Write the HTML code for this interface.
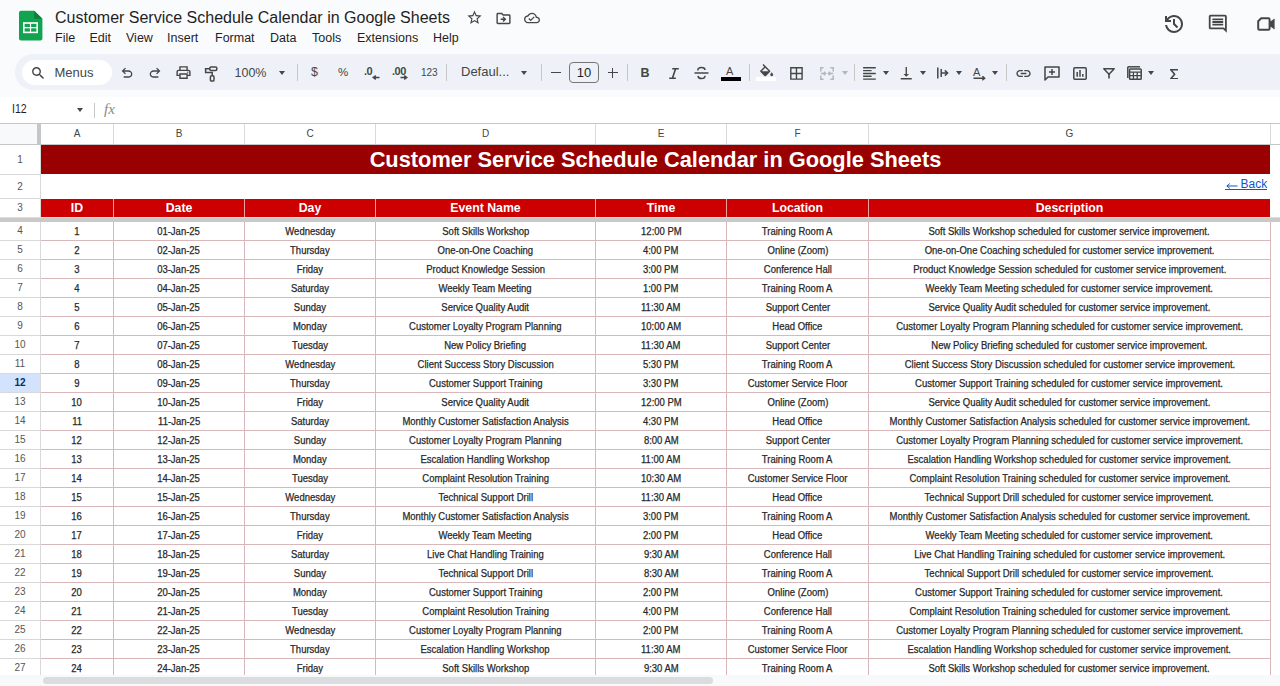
<!DOCTYPE html>
<html><head><meta charset="utf-8">
<style>
*{box-sizing:border-box;margin:0;padding:0}
html,body{width:1280px;height:686px;overflow:hidden;background:#f9fbfd;font-family:"Liberation Sans",sans-serif;color:#1f1f1f;position:relative}
.abs{position:absolute}
.title{position:absolute;left:55px;top:8px;font-size:16px;line-height:20px;white-space:nowrap;color:#1f1f1f}
.menu{position:absolute;top:30px;font-size:12.5px;line-height:16px;color:#1f1f1f;white-space:nowrap}
.tb{position:absolute;left:15px;top:54px;width:1300px;height:36px;background:#eef2f8;border-radius:18px}
.pill{position:absolute;left:22px;top:60px;width:90px;height:25px;background:#fff;border-radius:13px}
.ico{position:absolute;fill:#444746}
.sep{position:absolute;top:64px;width:1px;height:17px;background:#c7c7c7}
.tt{position:absolute;font-size:13px;line-height:16px;color:#444746;white-space:nowrap}
.dd{position:absolute;width:0;height:0;border-left:3px solid transparent;border-right:3px solid transparent;border-top:4px solid #444746}
.fbar{position:absolute;left:0;top:97px;width:1280px;height:26px;background:#fff}
.grid{position:absolute;left:0;top:123px;width:1280px;height:552px;background:#fff;overflow:hidden}
.colhdr{position:absolute;left:0;top:123px;width:1280px;height:22px;background:#fff;border-top:1px solid #c7c7c7;border-bottom:1px solid #c7c7c7}
.corner{position:absolute;left:0;top:0;width:37px;height:20px;background:#f8f9fa}
.freezev{position:absolute;left:37px;top:0;width:4px;height:20px;background:#c4c7c5}
.ch{position:absolute;top:0;height:20px;line-height:20px;text-align:center;font-size:10px;color:#444}
.chl{position:absolute;top:0;width:1px;height:20px;background:#d9d9d9}
.rh{position:absolute;left:0;width:40px;text-align:center;font-size:10px;color:#555}
.rh.sel{background:#d3e3fd;color:#062e6f;font-weight:bold}
.rhl{position:absolute;left:0;width:40px;height:1px;background:#d9d9d9}
.rvl{position:absolute;left:40px;top:145px;width:1px;height:530px;background:#d9d9d9}
.r1{position:absolute;left:41px;top:145px;width:1229px;height:29px;background:#990000;color:#fff;font-weight:bold;font-size:21.8px;line-height:29px;text-align:center;white-space:nowrap}
.back{position:absolute;left:1225px;top:176px;width:43px;height:17px;font-size:12px;line-height:17px;color:#1155cc;white-space:nowrap}
.hd{position:absolute;top:199px;height:18px;background:#cc0000;color:#fff;font-weight:bold;font-size:12.3px;line-height:18px;text-align:center;white-space:nowrap}
.hdl{position:absolute;top:199px;width:1px;height:18px;background:#f0a0a0}
.freezeh{position:absolute;left:0;top:217px;width:1280px;height:5px;background:#c9c9c9;border-top:1px solid #e6dada}
.c span{display:inline-block;transform:scaleX(0.95);-webkit-text-stroke:0.25px #333}
.c{position:absolute;height:18px;line-height:20px;font-size:10px;text-align:center;white-space:nowrap;color:#222}
.gh{position:absolute;left:41px;width:1229px;height:1px;background:#d8b8bb}
.gv{position:absolute;top:222px;width:1px;height:453px;background:#d8b8bb}
.sc{position:absolute;left:0;top:675px;width:1280px;height:11px;background:#f8f9fa}
.thumb{position:absolute;left:43px;top:677px;width:670px;height:7px;background:#dadce0;border-radius:4px}
</style></head><body>
<!-- logo -->
<svg class="abs" style="left:19px;top:10px" width="24" height="31" viewBox="0 0 24 31">
<path d="M2 0.8h13.2l8.2 8v19.6c0 1.1-0.9 2-2 2H2c-1.1 0-2-0.9-2-2V2.8c0-1.1 0.9-2 2-2z" fill="#11a350"/>
<path d="M15.2 0.8v6.4c0 0.9 0.7 1.6 1.6 1.6h6.6z" fill="#0c7f3d"/>
<rect x="4" y="12.2" width="15" height="11" fill="#fff"/>
<rect x="5.6" y="13.8" width="5.3" height="3.3" fill="#11a350"/>
<rect x="12.1" y="13.8" width="5.3" height="3.3" fill="#11a350"/>
<rect x="5.6" y="18.3" width="5.3" height="3.3" fill="#11a350"/>
<rect x="12.1" y="18.3" width="5.3" height="3.3" fill="#11a350"/>
</svg>
<div class="title">Customer Service Schedule Calendar in Google Sheets</div>
<!-- star folder cloud -->
<svg class="ico" style="left:466px;top:9px" width="17" height="17" viewBox="0 0 24 24"><path d="M22 9.24l-7.19-.62L12 2 9.19 8.63 2 9.24l5.46 4.73L5.82 21 12 17.27 18.18 21l-1.63-7.03L22 9.24zM12 15.4l-3.76 2.27 1-4.28-3.32-2.88 4.38-.38L12 6.1l1.71 4.04 4.38.38-3.32 2.88 1 4.28L12 15.4z"/></svg>
<svg class="ico" style="left:494.6px;top:9.8px" width="17" height="17" viewBox="0 0 24 24"><path d="M20 6h-8l-2-2H4c-1.1 0-1.99.9-1.99 2L2 18c0 1.1.9 2 2 2h16c1.1 0 2-.9 2-2V8c0-1.1-.9-2-2-2zm0 12H4V6h5.17l2 2H20v10zm-7.84-6H8v2h4.16l-1.59 1.59L11.99 17 16 13.01 11.99 9l-1.41 1.41L12.16 12z"/></svg>
<svg class="ico" style="left:523.8px;top:10px" width="16" height="16" viewBox="0 0 24 24"><path d="M19.35 10.04C18.67 6.59 15.64 4 12 4 9.11 4 6.6 5.640 5.35 8.04 2.34 8.36 0 10.91 0 14c0 3.31 2.69 6 6 6h13c2.760 0 5-2.24 5-5 0-2.64-2.05-4.78-4.65-4.96zM19 18H6c-2.21 0-4-1.79-4-4 0-2.05 1.53-3.76 3.56-3.97l1.07-.11.5-.95C8.080 7.14 9.94 6 12 6c2.62 0 4.88 1.86 5.39 4.43l.3 1.5 1.53.11c1.56.1 2.78 1.41 2.78 2.96 0 1.65-1.35 3-3 3zm-9-3.82l-2.090-2.09L6.5 13.5 10 17l6.01-6.01-1.41-1.41z"/></svg>
<!-- menu -->
<div class="menu" style="left:55px">File</div>
<div class="menu" style="left:89.5px">Edit</div>
<div class="menu" style="left:126px">View</div>
<div class="menu" style="left:167px">Insert</div>
<div class="menu" style="left:215px">Format</div>
<div class="menu" style="left:270px">Data</div>
<div class="menu" style="left:312px">Tools</div>
<div class="menu" style="left:357px">Extensions</div>
<div class="menu" style="left:433px">Help</div>
<!-- right icons -->
<svg class="ico" style="left:1162px;top:11.6px" width="24" height="24" viewBox="0 -960 960 960"><path d="M480-120q-138 0-240.5-91.5T122-440h82q14 104 92.5 172T480-200q117 0 198.5-81.5T760-480q0-117-81.5-198.5T480-760q-69 0-129 32t-101 88h110v80H120v-240h80v94q51-64 124.5-99T480-840q75 0 140.5 28.5t114 77q48.5 48.5 77 114T840-480q0 75-28.5 140.5t-77 114q-48.5 48.5-114 77T480-120Zm112-192L440-464v-216h80v184l128 128-56 56Z"/></svg>
<svg class="ico" style="left:1207.2px;top:13.2px" width="21.6" height="21.6" viewBox="0 0 24 24"><path d="M21.99 4c0-1.1-.89-2-1.990-2H4c-1.1 0-2 .9-2 2v12c0 1.1.9 2 2 2h14l4 4-.01-18zM20 4v13.17L18.83 16H4V4h16zM6 12h12v2H6zm0-3h12v2H6zm0-3h12v2H6z"/></svg>
<svg class="abs" style="left:1257px;top:17px" width="18" height="14" viewBox="0 0 18 14"><path d="M4.2 1.2H11.4Q12.6 1.2 12.6 2.4V11.6Q12.6 12.8 11.4 12.8H2.4Q1.2 12.8 1.2 11.6V4.2Z" fill="none" stroke="#444746" stroke-width="2" stroke-linejoin="round"/><path d="M12.6 5L17.6 1.6V12.4L12.6 9Z" fill="#444746"/></svg>
<!-- toolbar -->
<div class="tb"></div>
<div class="pill"></div>
<svg class="ico" style="left:29.942857142857143px;top:65.24285714285713px" width="16.457142857142856" height="16.457142857142856" viewBox="0 0 24 24" ><path d="M15.5 14h-.79l-.28-.27C15.41 12.59 16 11.11 16 9.5 16 5.91 13.09 3 9.5 3S3 5.91 3 9.5 5.91 16 9.5 16c1.61 0 3.090-.59 4.23-1.57l.27.28v.79l5 4.99L20.49 19l-4.99-5zm-6 0C7.01 14 5 11.99 5 9.5S7.01 5 9.5 5 14 7.01 14 9.5 11.99 14 9.5 14z"/></svg>
<div class="tt" style="left:54.5px;top:65px;font-size:13px">Menus</div>
<svg class="ico" style="left:118.62px;top:65.36px" width="16.049999999999997" height="16.049999999999997" viewBox="0 -960 960 960" ><path d="M280-200v-80h284q63 0 109.5-40T720-420q0-60-46.5-100T564-560H312l104 104-56 56-200-200 200-200 56 56-104 104h252q97 0 166.5 63T800-420q0 94-69.5 157T564-200H280Z"/></svg>
<svg class="ico" style="left:147.12px;top:65.36px" width="16.049999999999997" height="16.049999999999997" viewBox="0 -960 960 960" ><path transform="translate(960,0) scale(-1,1)" d="M280-200v-80h284q63 0 109.5-40T720-420q0-60-46.5-100T564-560H312l104 104-56 56-200-200 200-200 56 56-104 104h252q97 0 166.5 63T800-420q0 94-69.5 157T564-200H280Z"/></svg>
<svg class="ico" style="left:174.58px;top:64.47px" width="17.04" height="17.04" viewBox="0 -960 960 960" ><path d="M640-640v-120H320v120h-80v-200h480v200h-80Zm-480 80h640-640Zm560 100q17 0 28.5-11.5T760-500q0-17-11.5-28.5T720-540q-17 0-28.5 11.5T680-500q0 17 11.5 28.5T720-460Zm-80 260v-160H320v160h320Zm80 80H240v-160H80v-240q0-51 35-85.5t85-34.5h560q51 0 85.5 34.5T880-520v240H720v160Zm80-240v-160q0-17-11.5-28.5T760-560H200q-17 0-28.5 11.5T160-520v160h80v-80h480v80h80Z"/></svg>
<svg class="ico" style="left:204px;top:65px" width="14" height="17" viewBox="0 0 14 17" ><rect x="5.8" y="1.9" width="7" height="3.6" rx="1.2" fill="none" stroke="#444746" stroke-width="1.5"/><path d="M5.8 3.7H1.6V7.6H8.2V10.6" fill="none" stroke="#444746" stroke-width="1.5"/><rect x="6.4" y="10.8" width="3.6" height="5.3" rx="1.2" fill="none" stroke="#444746" stroke-width="1.5"/></svg>
<div class="tt" style="left:234.5px;top:65px;font-size:12.5px">100%</div>
<div class="dd" style="left:279px;top:70.8px;border-left-width:3.5px;border-right-width:3.5px;border-top-width:4px"></div>
<div class="sep" style="left:297px"></div>
<div class="tt" style="left:311px;top:64px;font-size:12.5px;">$</div>
<div class="tt" style="left:338px;top:64px;font-size:11.5px;">%</div>
<div class="tt" style="left:364px;top:63px;font-size:11px;font-weight:bold;letter-spacing:-0.5px">.0</div>
<svg class="ico" style="left:371.5px;top:74.8px" width="8" height="5" viewBox="0 0 8 5" ><path d="M7.5 2.5H2M3.8 0.6L1.2 2.5L3.8 4.4" fill="none" stroke="#444746" stroke-width="1.4"/></svg>
<div class="tt" style="left:392px;top:63px;font-size:11px;font-weight:bold;letter-spacing:-0.5px">.00</div>
<svg class="ico" style="left:399.5px;top:74.8px" width="8" height="5" viewBox="0 0 8 5" ><path d="M0.5 2.5H6M4.2 0.6L6.8 2.5L4.2 4.4" fill="none" stroke="#444746" stroke-width="1.4"/></svg>
<div class="tt" style="left:421px;top:65px;font-size:10px">123</div>
<div class="sep" style="left:446px"></div>
<div class="tt" style="left:461px;top:64px;font-size:13px">Defaul...</div>
<div class="dd" style="left:521px;top:70.8px;border-left-width:3.5px;border-right-width:3.5px;border-top-width:4px"></div>
<div class="sep" style="left:541px"></div>
<div class="abs" style="left:551px;top:72.2px;width:9.5px;height:1.3px;background:#444746"></div>
<div class="abs" style="left:569px;top:62px;width:30px;height:21px;border:1px solid #747775;border-radius:4px"></div>
<div class="tt" style="left:569px;top:64.5px;width:30px;text-align:center;font-size:13px;color:#1f1f1f">10</div>
<div class="abs" style="left:608px;top:72.2px;width:9.5px;height:1.3px;background:#444746"></div>
<div class="abs" style="left:612.1px;top:68px;width:1.3px;height:9.5px;background:#444746"></div>
<div class="sep" style="left:627px"></div>
<div class="tt" style="left:640.5px;top:64.5px;font-size:12.5px;font-weight:bold">B</div>
<svg class="ico" style="left:668.5px;top:67.5px" width="10" height="11" viewBox="0 0 10 11" ><path d="M3.2 0.8H9.8M0.2 10.2H6.8M6.6 0.8L3.4 10.2" fill="none" stroke="#444746" stroke-width="1.6"/></svg>
<svg class="ico" style="left:694px;top:66px" width="15" height="14" viewBox="0 0 15 14" ><path d="M0.5 7H14.5" stroke="#444746" stroke-width="1.5"/><path d="M3.8 4.5C3.8 2.6 5.3 1.5 7.5 1.5C9.6 1.5 11 2.6 11 4" fill="none" stroke="#444746" stroke-width="1.5"/><path d="M4 10C4.3 11.7 5.7 12.6 7.5 12.6C9.5 12.6 11 11.6 11 9.8" fill="none" stroke="#444746" stroke-width="1.5"/></svg>
<div class="tt" style="left:726px;top:63px;font-size:11px;">A</div>
<div class="abs" style="left:721px;top:77.3px;width:20px;height:3.3px;background:#000"></div>
<div class="sep" style="left:749px"></div>
<svg class="ico" style="left:757.83px;top:63.6px" width="17.333333333333332" height="17.333333333333332" viewBox="0 0 24 24" ><path d="M16.56 8.94L7.62 0 6.21 1.41l2.38 2.38-5.15 5.15c-.59.59-.59 1.54 0 2.12l5.5 5.5c.29.29.68.44 1.06.44s.77-.15 1.06-.44l5.5-5.5c.59-.58.59-1.530 0-2.12zM5.21 10L10 5.21 14.79 10H5.21zM19 11.5s-2 2.17-2 3.5c0 1.1.9 2 2 2s2-.9 2-2c0-1.33-2-3.5-2-3.5z"/></svg>
<div class="abs" style="left:756px;top:77.3px;width:20px;height:3.3px;background:#fff"></div>
<svg class="ico" style="left:788.48px;top:64.88px" width="16.93333333333333" height="16.93333333333333" viewBox="0 0 24 24" ><path d="M3 3v18h18V3H3zm8 16H5v-6h6v6zm0-8H5V5h6v6zm8 8h-6v-6h6v6zm0-8h-6V5h6v6z"/></svg>
<svg class="ico" style="left:819.5px;top:67px" width="14" height="13" viewBox="0 0 14 13" ><path d="M3.6 0.8H0.8V4.4M0.8 8.6V12.2H3.6M10.4 0.8H13.2V4.4M13.2 8.6V12.2H10.4" fill="none" stroke="#b4b6b8" stroke-width="1.5"/><path d="M0.8 6.5H5.6M3.9 4.7L5.7 6.5L3.9 8.3M13.2 6.5H8.4M10.1 4.7L8.3 6.5L10.1 8.3" fill="none" stroke="#b4b6b8" stroke-width="1.4"/></svg>
<div class="dd" style="left:842px;top:70.8px;border-left-width:3px;border-right-width:3px;border-top-width:4px;border-top-color:#b4b6b8"></div>
<div class="sep" style="left:854px"></div>
<svg class="ico" style="left:861.18px;top:65.18px" width="16.93333333333333" height="16.93333333333333" viewBox="0 0 24 24" ><path d="M15 15H3v2h12v-2zm0-8H3v2h12V7zM3 13h18v-2H3v2zm0 8h18v-2H3v2zM3 3v2h18V3H3z"/></svg>
<div class="dd" style="left:882.5px;top:70.8px;border-left-width:3px;border-right-width:3px;border-top-width:4px"></div>
<svg class="ico" style="left:898.25px;top:64.94px" width="16.5" height="16.5" viewBox="0 0 24 24" ><path d="M16 13h-3V3h-2v10H8l4 4 4-4zM4 19v2h16v-2H4z"/></svg>
<div class="dd" style="left:919.5px;top:70.8px;border-left-width:3px;border-right-width:3px;border-top-width:4px"></div>
<svg class="ico" style="left:936.5px;top:67px" width="12" height="12" viewBox="0 0 12 12" ><path d="M0.8 0.5V11.5M4.2 2V10M4.2 6H10.5M7.8 3.4L10.6 6L7.8 8.6" fill="none" stroke="#444746" stroke-width="1.5"/></svg>
<div class="dd" style="left:955.5px;top:70.8px;border-left-width:3px;border-right-width:3px;border-top-width:4px"></div>
<div class="tt" style="left:973px;top:63.5px;font-size:11px;">A</div>
<svg class="ico" style="left:972.5px;top:76px" width="13" height="5" viewBox="0 0 13 5" ><path d="M0.5 2.2H11.5M9.3 0.2L11.7 2.2L9.3 4.2" fill="none" stroke="#444746" stroke-width="1.4"/></svg>
<div class="dd" style="left:991.5px;top:70.8px;border-left-width:3px;border-right-width:3px;border-top-width:4px"></div>
<div class="sep" style="left:1006px"></div>
<svg class="ico" style="left:1014.83px;top:64.51px" width="17.1" height="17.1" viewBox="0 0 24 24" ><path d="M3.9 12c0-1.71 1.39-3.1 3.1-3.1h4V7H7c-2.76 0-5 2.24-5 5s2.24 5 5 5h4v-1.9H7c-1.71 0-3.1-1.39-3.1-3.1zM8 13h8v-2H8v2zm9-6h-4v1.9h4c1.71 0 3.1 1.39 3.1 3.1s-1.39 3.1-3.1 3.1h-4V17h4c2.76 0 5-2.24 5-5s-2.24-5-5-5z"/></svg>
<svg class="ico" style="left:1043.5px;top:66px" width="16" height="15" viewBox="0 0 16 15" ><path d="M1 1H15V11H4L1 14Z" fill="none" stroke="#444746" stroke-width="1.5" stroke-linejoin="round"/><path d="M8 3V9M5 6H11" stroke="#444746" stroke-width="1.5"/></svg>
<svg class="ico" style="left:1073px;top:67px" width="14" height="13" viewBox="0 0 14 13" ><rect x="0.8" y="0.8" width="12.4" height="11.4" rx="1" fill="none" stroke="#444746" stroke-width="1.5"/><path d="M4.2 5V9.8M7 3V9.8M9.8 7V9.8" stroke="#444746" stroke-width="1.5"/></svg>
<svg class="ico" style="left:1102.5px;top:68px" width="12" height="11" viewBox="0 0 12 11" ><path d="M0.8 0.8H11.2L6 6.2Z" fill="none" stroke="#444746" stroke-width="1.5" stroke-linejoin="round"/><path d="M6 6V10.5" stroke="#444746" stroke-width="1.6"/></svg>
<svg class="ico" style="left:1127px;top:66px" width="15" height="14" viewBox="0 0 15 14" ><path d="M0.8 0.8H13" stroke="#444746" stroke-width="1.5"/><rect x="2.6" y="3" width="11.6" height="10.2" rx="0.8" fill="none" stroke="#444746" stroke-width="1.5"/><path d="M0.8 0.8V12" stroke="#444746" stroke-width="1.5"/><path d="M2.6 6.2H14.2M2.6 9.6H14.2M6.4 6.2V13M10.2 6.2V13" stroke="#444746" stroke-width="1.3"/></svg>
<div class="dd" style="left:1148px;top:70.8px;border-left-width:3px;border-right-width:3px;border-top-width:4px"></div>
<svg class="ico" style="left:1169.5px;top:68.5px" width="8.5" height="10.5" viewBox="0 0 8.5 10.5" ><path d="M8 0.8H0.8L4.6 5.25L0.8 9.7H8" fill="none" stroke="#444746" stroke-width="1.6"/></svg>
<!-- formula bar -->
<div class="fbar"></div>
<div class="abs" style="left:12px;top:102px;font-size:12px;line-height:14px;color:#1f1f1f;transform:scaleX(0.88);transform-origin:0 0">I12</div>
<div class="dd" style="left:77px;top:108px;border-left-width:3.5px;border-right-width:3.5px;border-top-width:4px"></div>
<div class="abs" style="left:94px;top:103px;width:1px;height:15px;background:#c7c7c7"></div>
<div class="abs" style="left:104px;top:101px;font-family:'Liberation Serif',serif;font-style:italic;font-size:15px;line-height:17px;color:#888">fx</div>
<!-- grid -->
<div class="grid"></div>
<div class="rvl"></div>
<div class="colhdr">
<div class="corner"></div><div class="freezev"></div>
<div class="ch" style="left:41px;width:72px">A</div>
<div class="chl" style="left:113px"></div>
<div class="ch" style="left:114px;width:130px">B</div>
<div class="chl" style="left:244px"></div>
<div class="ch" style="left:245px;width:130px">C</div>
<div class="chl" style="left:375px"></div>
<div class="ch" style="left:376px;width:219px">D</div>
<div class="chl" style="left:595px"></div>
<div class="ch" style="left:596px;width:130px">E</div>
<div class="chl" style="left:726px"></div>
<div class="ch" style="left:727px;width:141px">F</div>
<div class="chl" style="left:868px"></div>
<div class="ch" style="left:869px;width:401px">G</div>
<div class="chl" style="left:1270px"></div>
</div>
<div class="rh" style="top:145px;height:29px;line-height:29px">1</div>
<div class="rhl" style="top:174px"></div>
<div class="rh" style="top:175px;height:23px;line-height:23px">2</div>
<div class="rhl" style="top:198px"></div>
<div class="rh" style="top:199px;height:18px;line-height:18px">3</div>
<div class="rh" style="top:222px;height:18px;line-height:18px">4</div>
<div class="rhl" style="top:240px"></div>
<div class="rh" style="top:241px;height:18px;line-height:18px">5</div>
<div class="rhl" style="top:259px"></div>
<div class="rh" style="top:260px;height:18px;line-height:18px">6</div>
<div class="rhl" style="top:278px"></div>
<div class="rh" style="top:279px;height:18px;line-height:18px">7</div>
<div class="rhl" style="top:297px"></div>
<div class="rh" style="top:298px;height:18px;line-height:18px">8</div>
<div class="rhl" style="top:316px"></div>
<div class="rh" style="top:317px;height:18px;line-height:18px">9</div>
<div class="rhl" style="top:335px"></div>
<div class="rh" style="top:336px;height:18px;line-height:18px">10</div>
<div class="rhl" style="top:354px"></div>
<div class="rh" style="top:355px;height:18px;line-height:18px">11</div>
<div class="rhl" style="top:373px"></div>
<div class="rh sel" style="top:374px;height:18px;line-height:18px">12</div>
<div class="rhl" style="top:392px"></div>
<div class="rh" style="top:393px;height:18px;line-height:18px">13</div>
<div class="rhl" style="top:411px"></div>
<div class="rh" style="top:412px;height:18px;line-height:18px">14</div>
<div class="rhl" style="top:430px"></div>
<div class="rh" style="top:431px;height:18px;line-height:18px">15</div>
<div class="rhl" style="top:449px"></div>
<div class="rh" style="top:450px;height:18px;line-height:18px">16</div>
<div class="rhl" style="top:468px"></div>
<div class="rh" style="top:469px;height:18px;line-height:18px">17</div>
<div class="rhl" style="top:487px"></div>
<div class="rh" style="top:488px;height:18px;line-height:18px">18</div>
<div class="rhl" style="top:506px"></div>
<div class="rh" style="top:507px;height:18px;line-height:18px">19</div>
<div class="rhl" style="top:525px"></div>
<div class="rh" style="top:526px;height:18px;line-height:18px">20</div>
<div class="rhl" style="top:544px"></div>
<div class="rh" style="top:545px;height:18px;line-height:18px">21</div>
<div class="rhl" style="top:563px"></div>
<div class="rh" style="top:564px;height:18px;line-height:18px">22</div>
<div class="rhl" style="top:582px"></div>
<div class="rh" style="top:583px;height:18px;line-height:18px">23</div>
<div class="rhl" style="top:601px"></div>
<div class="rh" style="top:602px;height:18px;line-height:18px">24</div>
<div class="rhl" style="top:620px"></div>
<div class="rh" style="top:621px;height:18px;line-height:18px">25</div>
<div class="rhl" style="top:639px"></div>
<div class="rh" style="top:640px;height:18px;line-height:18px">26</div>
<div class="rhl" style="top:658px"></div>
<div class="rh" style="top:659px;height:18px;line-height:18px">27</div>
<div class="rhl" style="top:677px"></div>
<div class="r1">Customer Service Schedule Calendar in Google Sheets</div>
<div class="back"><svg width="12" height="6" viewBox="0 0 12 6" style="position:absolute;left:0.5px;top:6.5px"><path d="M11.5 3H1.2M3.8 0.6L0.8 3L3.8 5.4" fill="none" stroke="#1155cc" stroke-width="1"/></svg><span style="margin-left:15.5px">Back</span><div style="position:absolute;left:0;top:12.8px;width:42px;height:1px;background:#1155cc"></div></div>
<div class="hd" style="left:41px;width:72px"><span>ID</span></div>
<div class="hdl" style="left:113px"></div>
<div class="hd" style="left:114px;width:130px"><span>Date</span></div>
<div class="hdl" style="left:244px"></div>
<div class="hd" style="left:245px;width:130px"><span>Day</span></div>
<div class="hdl" style="left:375px"></div>
<div class="hd" style="left:376px;width:219px"><span>Event Name</span></div>
<div class="hdl" style="left:595px"></div>
<div class="hd" style="left:596px;width:130px"><span>Time</span></div>
<div class="hdl" style="left:726px"></div>
<div class="hd" style="left:727px;width:141px"><span>Location</span></div>
<div class="hdl" style="left:868px"></div>
<div class="hd" style="left:869px;width:401px"><span>Description</span></div>
<div class="freezeh"></div>
<div class="c" style="left:41px;top:222px;width:72px"><span>1</span></div>
<div class="c" style="left:114px;top:222px;width:130px"><span>01-Jan-25</span></div>
<div class="c" style="left:245px;top:222px;width:130px"><span>Wednesday</span></div>
<div class="c" style="left:376px;top:222px;width:219px"><span>Soft Skills Workshop</span></div>
<div class="c" style="left:596px;top:222px;width:130px"><span>12:00 PM</span></div>
<div class="c" style="left:727px;top:222px;width:141px"><span>Training Room A</span></div>
<div class="c" style="left:869px;top:222px;width:401px"><span>Soft Skills Workshop scheduled for customer service improvement.</span></div>
<div class="c" style="left:41px;top:241px;width:72px"><span>2</span></div>
<div class="c" style="left:114px;top:241px;width:130px"><span>02-Jan-25</span></div>
<div class="c" style="left:245px;top:241px;width:130px"><span>Thursday</span></div>
<div class="c" style="left:376px;top:241px;width:219px"><span>One-on-One Coaching</span></div>
<div class="c" style="left:596px;top:241px;width:130px"><span>4:00 PM</span></div>
<div class="c" style="left:727px;top:241px;width:141px"><span>Online (Zoom)</span></div>
<div class="c" style="left:869px;top:241px;width:401px"><span>One-on-One Coaching scheduled for customer service improvement.</span></div>
<div class="c" style="left:41px;top:260px;width:72px"><span>3</span></div>
<div class="c" style="left:114px;top:260px;width:130px"><span>03-Jan-25</span></div>
<div class="c" style="left:245px;top:260px;width:130px"><span>Friday</span></div>
<div class="c" style="left:376px;top:260px;width:219px"><span>Product Knowledge Session</span></div>
<div class="c" style="left:596px;top:260px;width:130px"><span>3:00 PM</span></div>
<div class="c" style="left:727px;top:260px;width:141px"><span>Conference Hall</span></div>
<div class="c" style="left:869px;top:260px;width:401px"><span>Product Knowledge Session scheduled for customer service improvement.</span></div>
<div class="c" style="left:41px;top:279px;width:72px"><span>4</span></div>
<div class="c" style="left:114px;top:279px;width:130px"><span>04-Jan-25</span></div>
<div class="c" style="left:245px;top:279px;width:130px"><span>Saturday</span></div>
<div class="c" style="left:376px;top:279px;width:219px"><span>Weekly Team Meeting</span></div>
<div class="c" style="left:596px;top:279px;width:130px"><span>1:00 PM</span></div>
<div class="c" style="left:727px;top:279px;width:141px"><span>Training Room A</span></div>
<div class="c" style="left:869px;top:279px;width:401px"><span>Weekly Team Meeting scheduled for customer service improvement.</span></div>
<div class="c" style="left:41px;top:298px;width:72px"><span>5</span></div>
<div class="c" style="left:114px;top:298px;width:130px"><span>05-Jan-25</span></div>
<div class="c" style="left:245px;top:298px;width:130px"><span>Sunday</span></div>
<div class="c" style="left:376px;top:298px;width:219px"><span>Service Quality Audit</span></div>
<div class="c" style="left:596px;top:298px;width:130px"><span>11:30 AM</span></div>
<div class="c" style="left:727px;top:298px;width:141px"><span>Support Center</span></div>
<div class="c" style="left:869px;top:298px;width:401px"><span>Service Quality Audit scheduled for customer service improvement.</span></div>
<div class="c" style="left:41px;top:317px;width:72px"><span>6</span></div>
<div class="c" style="left:114px;top:317px;width:130px"><span>06-Jan-25</span></div>
<div class="c" style="left:245px;top:317px;width:130px"><span>Monday</span></div>
<div class="c" style="left:376px;top:317px;width:219px"><span>Customer Loyalty Program Planning</span></div>
<div class="c" style="left:596px;top:317px;width:130px"><span>10:00 AM</span></div>
<div class="c" style="left:727px;top:317px;width:141px"><span>Head Office</span></div>
<div class="c" style="left:869px;top:317px;width:401px"><span>Customer Loyalty Program Planning scheduled for customer service improvement.</span></div>
<div class="c" style="left:41px;top:336px;width:72px"><span>7</span></div>
<div class="c" style="left:114px;top:336px;width:130px"><span>07-Jan-25</span></div>
<div class="c" style="left:245px;top:336px;width:130px"><span>Tuesday</span></div>
<div class="c" style="left:376px;top:336px;width:219px"><span>New Policy Briefing</span></div>
<div class="c" style="left:596px;top:336px;width:130px"><span>11:30 AM</span></div>
<div class="c" style="left:727px;top:336px;width:141px"><span>Support Center</span></div>
<div class="c" style="left:869px;top:336px;width:401px"><span>New Policy Briefing scheduled for customer service improvement.</span></div>
<div class="c" style="left:41px;top:355px;width:72px"><span>8</span></div>
<div class="c" style="left:114px;top:355px;width:130px"><span>08-Jan-25</span></div>
<div class="c" style="left:245px;top:355px;width:130px"><span>Wednesday</span></div>
<div class="c" style="left:376px;top:355px;width:219px"><span>Client Success Story Discussion</span></div>
<div class="c" style="left:596px;top:355px;width:130px"><span>5:30 PM</span></div>
<div class="c" style="left:727px;top:355px;width:141px"><span>Training Room A</span></div>
<div class="c" style="left:869px;top:355px;width:401px"><span>Client Success Story Discussion scheduled for customer service improvement.</span></div>
<div class="c" style="left:41px;top:374px;width:72px"><span>9</span></div>
<div class="c" style="left:114px;top:374px;width:130px"><span>09-Jan-25</span></div>
<div class="c" style="left:245px;top:374px;width:130px"><span>Thursday</span></div>
<div class="c" style="left:376px;top:374px;width:219px"><span>Customer Support Training</span></div>
<div class="c" style="left:596px;top:374px;width:130px"><span>3:30 PM</span></div>
<div class="c" style="left:727px;top:374px;width:141px"><span>Customer Service Floor</span></div>
<div class="c" style="left:869px;top:374px;width:401px"><span>Customer Support Training scheduled for customer service improvement.</span></div>
<div class="c" style="left:41px;top:393px;width:72px"><span>10</span></div>
<div class="c" style="left:114px;top:393px;width:130px"><span>10-Jan-25</span></div>
<div class="c" style="left:245px;top:393px;width:130px"><span>Friday</span></div>
<div class="c" style="left:376px;top:393px;width:219px"><span>Service Quality Audit</span></div>
<div class="c" style="left:596px;top:393px;width:130px"><span>12:00 PM</span></div>
<div class="c" style="left:727px;top:393px;width:141px"><span>Online (Zoom)</span></div>
<div class="c" style="left:869px;top:393px;width:401px"><span>Service Quality Audit scheduled for customer service improvement.</span></div>
<div class="c" style="left:41px;top:412px;width:72px"><span>11</span></div>
<div class="c" style="left:114px;top:412px;width:130px"><span>11-Jan-25</span></div>
<div class="c" style="left:245px;top:412px;width:130px"><span>Saturday</span></div>
<div class="c" style="left:376px;top:412px;width:219px"><span>Monthly Customer Satisfaction Analysis</span></div>
<div class="c" style="left:596px;top:412px;width:130px"><span>4:30 PM</span></div>
<div class="c" style="left:727px;top:412px;width:141px"><span>Head Office</span></div>
<div class="c" style="left:869px;top:412px;width:401px"><span>Monthly Customer Satisfaction Analysis scheduled for customer service improvement.</span></div>
<div class="c" style="left:41px;top:431px;width:72px"><span>12</span></div>
<div class="c" style="left:114px;top:431px;width:130px"><span>12-Jan-25</span></div>
<div class="c" style="left:245px;top:431px;width:130px"><span>Sunday</span></div>
<div class="c" style="left:376px;top:431px;width:219px"><span>Customer Loyalty Program Planning</span></div>
<div class="c" style="left:596px;top:431px;width:130px"><span>8:00 AM</span></div>
<div class="c" style="left:727px;top:431px;width:141px"><span>Support Center</span></div>
<div class="c" style="left:869px;top:431px;width:401px"><span>Customer Loyalty Program Planning scheduled for customer service improvement.</span></div>
<div class="c" style="left:41px;top:450px;width:72px"><span>13</span></div>
<div class="c" style="left:114px;top:450px;width:130px"><span>13-Jan-25</span></div>
<div class="c" style="left:245px;top:450px;width:130px"><span>Monday</span></div>
<div class="c" style="left:376px;top:450px;width:219px"><span>Escalation Handling Workshop</span></div>
<div class="c" style="left:596px;top:450px;width:130px"><span>11:00 AM</span></div>
<div class="c" style="left:727px;top:450px;width:141px"><span>Training Room A</span></div>
<div class="c" style="left:869px;top:450px;width:401px"><span>Escalation Handling Workshop scheduled for customer service improvement.</span></div>
<div class="c" style="left:41px;top:469px;width:72px"><span>14</span></div>
<div class="c" style="left:114px;top:469px;width:130px"><span>14-Jan-25</span></div>
<div class="c" style="left:245px;top:469px;width:130px"><span>Tuesday</span></div>
<div class="c" style="left:376px;top:469px;width:219px"><span>Complaint Resolution Training</span></div>
<div class="c" style="left:596px;top:469px;width:130px"><span>10:30 AM</span></div>
<div class="c" style="left:727px;top:469px;width:141px"><span>Customer Service Floor</span></div>
<div class="c" style="left:869px;top:469px;width:401px"><span>Complaint Resolution Training scheduled for customer service improvement.</span></div>
<div class="c" style="left:41px;top:488px;width:72px"><span>15</span></div>
<div class="c" style="left:114px;top:488px;width:130px"><span>15-Jan-25</span></div>
<div class="c" style="left:245px;top:488px;width:130px"><span>Wednesday</span></div>
<div class="c" style="left:376px;top:488px;width:219px"><span>Technical Support Drill</span></div>
<div class="c" style="left:596px;top:488px;width:130px"><span>11:30 AM</span></div>
<div class="c" style="left:727px;top:488px;width:141px"><span>Head Office</span></div>
<div class="c" style="left:869px;top:488px;width:401px"><span>Technical Support Drill scheduled for customer service improvement.</span></div>
<div class="c" style="left:41px;top:507px;width:72px"><span>16</span></div>
<div class="c" style="left:114px;top:507px;width:130px"><span>16-Jan-25</span></div>
<div class="c" style="left:245px;top:507px;width:130px"><span>Thursday</span></div>
<div class="c" style="left:376px;top:507px;width:219px"><span>Monthly Customer Satisfaction Analysis</span></div>
<div class="c" style="left:596px;top:507px;width:130px"><span>3:00 PM</span></div>
<div class="c" style="left:727px;top:507px;width:141px"><span>Training Room A</span></div>
<div class="c" style="left:869px;top:507px;width:401px"><span>Monthly Customer Satisfaction Analysis scheduled for customer service improvement.</span></div>
<div class="c" style="left:41px;top:526px;width:72px"><span>17</span></div>
<div class="c" style="left:114px;top:526px;width:130px"><span>17-Jan-25</span></div>
<div class="c" style="left:245px;top:526px;width:130px"><span>Friday</span></div>
<div class="c" style="left:376px;top:526px;width:219px"><span>Weekly Team Meeting</span></div>
<div class="c" style="left:596px;top:526px;width:130px"><span>2:00 PM</span></div>
<div class="c" style="left:727px;top:526px;width:141px"><span>Head Office</span></div>
<div class="c" style="left:869px;top:526px;width:401px"><span>Weekly Team Meeting scheduled for customer service improvement.</span></div>
<div class="c" style="left:41px;top:545px;width:72px"><span>18</span></div>
<div class="c" style="left:114px;top:545px;width:130px"><span>18-Jan-25</span></div>
<div class="c" style="left:245px;top:545px;width:130px"><span>Saturday</span></div>
<div class="c" style="left:376px;top:545px;width:219px"><span>Live Chat Handling Training</span></div>
<div class="c" style="left:596px;top:545px;width:130px"><span>9:30 AM</span></div>
<div class="c" style="left:727px;top:545px;width:141px"><span>Conference Hall</span></div>
<div class="c" style="left:869px;top:545px;width:401px"><span>Live Chat Handling Training scheduled for customer service improvement.</span></div>
<div class="c" style="left:41px;top:564px;width:72px"><span>19</span></div>
<div class="c" style="left:114px;top:564px;width:130px"><span>19-Jan-25</span></div>
<div class="c" style="left:245px;top:564px;width:130px"><span>Sunday</span></div>
<div class="c" style="left:376px;top:564px;width:219px"><span>Technical Support Drill</span></div>
<div class="c" style="left:596px;top:564px;width:130px"><span>8:30 AM</span></div>
<div class="c" style="left:727px;top:564px;width:141px"><span>Training Room A</span></div>
<div class="c" style="left:869px;top:564px;width:401px"><span>Technical Support Drill scheduled for customer service improvement.</span></div>
<div class="c" style="left:41px;top:583px;width:72px"><span>20</span></div>
<div class="c" style="left:114px;top:583px;width:130px"><span>20-Jan-25</span></div>
<div class="c" style="left:245px;top:583px;width:130px"><span>Monday</span></div>
<div class="c" style="left:376px;top:583px;width:219px"><span>Customer Support Training</span></div>
<div class="c" style="left:596px;top:583px;width:130px"><span>2:00 PM</span></div>
<div class="c" style="left:727px;top:583px;width:141px"><span>Online (Zoom)</span></div>
<div class="c" style="left:869px;top:583px;width:401px"><span>Customer Support Training scheduled for customer service improvement.</span></div>
<div class="c" style="left:41px;top:602px;width:72px"><span>21</span></div>
<div class="c" style="left:114px;top:602px;width:130px"><span>21-Jan-25</span></div>
<div class="c" style="left:245px;top:602px;width:130px"><span>Tuesday</span></div>
<div class="c" style="left:376px;top:602px;width:219px"><span>Complaint Resolution Training</span></div>
<div class="c" style="left:596px;top:602px;width:130px"><span>4:00 PM</span></div>
<div class="c" style="left:727px;top:602px;width:141px"><span>Conference Hall</span></div>
<div class="c" style="left:869px;top:602px;width:401px"><span>Complaint Resolution Training scheduled for customer service improvement.</span></div>
<div class="c" style="left:41px;top:621px;width:72px"><span>22</span></div>
<div class="c" style="left:114px;top:621px;width:130px"><span>22-Jan-25</span></div>
<div class="c" style="left:245px;top:621px;width:130px"><span>Wednesday</span></div>
<div class="c" style="left:376px;top:621px;width:219px"><span>Customer Loyalty Program Planning</span></div>
<div class="c" style="left:596px;top:621px;width:130px"><span>2:00 PM</span></div>
<div class="c" style="left:727px;top:621px;width:141px"><span>Training Room A</span></div>
<div class="c" style="left:869px;top:621px;width:401px"><span>Customer Loyalty Program Planning scheduled for customer service improvement.</span></div>
<div class="c" style="left:41px;top:640px;width:72px"><span>23</span></div>
<div class="c" style="left:114px;top:640px;width:130px"><span>23-Jan-25</span></div>
<div class="c" style="left:245px;top:640px;width:130px"><span>Thursday</span></div>
<div class="c" style="left:376px;top:640px;width:219px"><span>Escalation Handling Workshop</span></div>
<div class="c" style="left:596px;top:640px;width:130px"><span>11:30 AM</span></div>
<div class="c" style="left:727px;top:640px;width:141px"><span>Customer Service Floor</span></div>
<div class="c" style="left:869px;top:640px;width:401px"><span>Escalation Handling Workshop scheduled for customer service improvement.</span></div>
<div class="c" style="left:41px;top:659px;width:72px"><span>24</span></div>
<div class="c" style="left:114px;top:659px;width:130px"><span>24-Jan-25</span></div>
<div class="c" style="left:245px;top:659px;width:130px"><span>Friday</span></div>
<div class="c" style="left:376px;top:659px;width:219px"><span>Soft Skills Workshop</span></div>
<div class="c" style="left:596px;top:659px;width:130px"><span>9:30 AM</span></div>
<div class="c" style="left:727px;top:659px;width:141px"><span>Training Room A</span></div>
<div class="c" style="left:869px;top:659px;width:401px"><span>Soft Skills Workshop scheduled for customer service improvement.</span></div>
<div class="gh" style="top:240px"></div>
<div class="gh" style="top:259px"></div>
<div class="gh" style="top:278px"></div>
<div class="gh" style="top:297px"></div>
<div class="gh" style="top:316px"></div>
<div class="gh" style="top:335px"></div>
<div class="gh" style="top:354px"></div>
<div class="gh" style="top:373px"></div>
<div class="gh" style="top:392px"></div>
<div class="gh" style="top:411px"></div>
<div class="gh" style="top:430px"></div>
<div class="gh" style="top:449px"></div>
<div class="gh" style="top:468px"></div>
<div class="gh" style="top:487px"></div>
<div class="gh" style="top:506px"></div>
<div class="gh" style="top:525px"></div>
<div class="gh" style="top:544px"></div>
<div class="gh" style="top:563px"></div>
<div class="gh" style="top:582px"></div>
<div class="gh" style="top:601px"></div>
<div class="gh" style="top:620px"></div>
<div class="gh" style="top:639px"></div>
<div class="gh" style="top:658px"></div>
<div class="gh" style="top:677px"></div>
<div class="gv" style="left:113px"></div>
<div class="gv" style="left:244px"></div>
<div class="gv" style="left:375px"></div>
<div class="gv" style="left:595px"></div>
<div class="gv" style="left:726px"></div>
<div class="gv" style="left:868px"></div>
<div class="gv" style="left:1270px"></div>
<div class="sc"></div>
<div class="thumb"></div>
</body></html>
